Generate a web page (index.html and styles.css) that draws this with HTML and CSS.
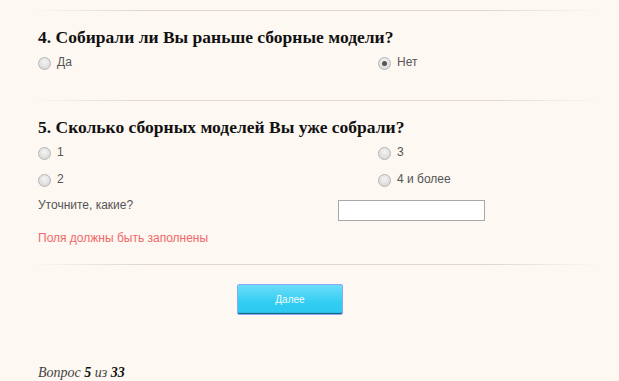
FILE: index.html
```html
<!DOCTYPE html>
<html lang="ru">
<head>
  <meta charset="UTF-8" />
  <title>Опрос</title>
  <link rel="stylesheet" href="styles.css">
</head>
<body>
  <div class="survey">
    <hr class="divider divider-top">
    <div class="question">
      <h3>4. Собирали ли Вы раньше сборные модели?</h3>
      <div class="options">
        <label class="option"><span class="radio"></span>Да</label>
        <label class="option"><span class="radio checked"></span>Нет</label>
      </div>
    </div>
    <hr class="divider">
    <div class="question">
      <h3>5. Сколько сборных моделей Вы уже собрали?</h3>
      <div class="options">
        <label class="option"><span class="radio"></span>1</label>
        <label class="option"><span class="radio"></span>3</label>
        <label class="option"><span class="radio"></span>2</label>
        <label class="option"><span class="radio"></span>4 и более</label>
      </div>
      <div class="specify">
        <span>Уточните, какие?</span>
        <input type="text" class="specify-input">
      </div>
      <p class="error">Поля должны быть заполнены</p>
    </div>
    <hr class="divider">
    <div class="actions">
      <button type="button" class="button">Далее</button>
    </div>
    <p class="progress">Вопрос <b>5</b> из <b>33</b></p>
  </div>
</body>
</html>
```

FILE: styles.css
```css
body {
  margin: 0;
  background-color: #FDF8F2;
  font-family: 'Liberation Sans', Arial, sans-serif;
}
.survey {
  width: 619px;
  box-sizing: border-box;
  padding: 0 0 0 38px;
}
.divider {
  border: none;
  height: 1px;
  margin: 0 20px 0 -8px;
  background: linear-gradient(to right, rgba(220, 214, 205, 0), #DDD7CF 20%, #DDD7CF 80%, rgba(220, 214, 205, 0));
}
.divider-top {
  margin-top: 10px;
}
.question {
  padding: 16px 0 0;
}
h3 {
  margin: 0;
  font-family: 'Liberation Serif', Georgia, serif;
  font-weight: bold;
  font-size: 17.5px;
  line-height: 20px;
  color: #111;
}
.options {
  display: grid;
  grid-template-columns: 340px auto;
  row-gap: 11px;
  margin: 7px 0 30px;
}
.option {
  display: flex;
  align-items: center;
  font-size: 12px;
  line-height: 14px;
  color: #555;
}
.radio {
  width: 11px;
  height: 11px;
  border: 1px solid #B5B5B5;
  border-radius: 50%;
  background: radial-gradient(circle at 50% 35%, #F4F4F4, #D2D2D2);
  margin: 3px 6px 0 0;
  position: relative;
  flex: none;
}
.radio.checked::after {
  content: "";
  position: absolute;
  left: 3px;
  top: 3px;
  width: 5px;
  height: 5px;
  border-radius: 50%;
  background: #555;
}
.specify {
  display: grid;
  grid-template-columns: 300px auto;
  align-items: start;
  margin-top: -19px;
  font-size: 12px;
  line-height: 14px;
  color: #555;
}
.specify-input {
  width: 147px;
  height: 21px;
  box-sizing: border-box;
  margin-top: 2px;
  border: 1px solid #A8A8A8;
  background: #FFF;
}
.error {
  margin: 10px 0 19px;
  font-size: 12px;
  line-height: 14px;
  color: #F0686A;
}
.actions {
  padding: 19px 0 0 199px;
}
.button {
  width: 106px;
  height: 31px;
  border: 1px solid #8FA6F0;
  border-radius: 2px;
  background: linear-gradient(#6CDDF8, #32CDF3 60%, #2EC8F0);
  box-shadow: inset 0 -2px 1px -1px #1A5A70;
  color: #F4FBFF;
  font-family: 'Liberation Sans', Arial, sans-serif;
  font-size: 10px;
  cursor: pointer;
}
.progress {
  margin: 50px 0 0;
  font-family: 'Liberation Serif', Georgia, serif;
  font-style: italic;
  font-size: 14px;
  line-height: 16px;
  color: #444;
}
.progress b {
  color: #111;
}
```
